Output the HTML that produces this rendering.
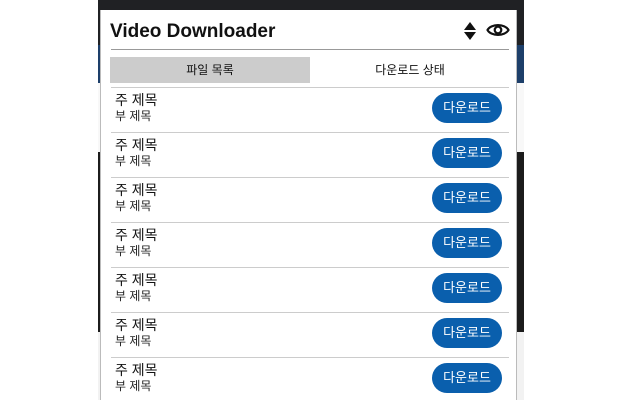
<!DOCTYPE html>
<html><head><meta charset="utf-8"><style>
*{margin:0;padding:0;box-sizing:border-box}
html,body{width:640px;height:400px;overflow:hidden}
body{position:relative;background:#fff;font-family:"Liberation Sans","Noto Sans CJK KR",sans-serif}
.bg{position:absolute;left:98px;width:426px}
.pop{position:absolute;left:100px;top:10px;width:417px;height:390px;background:#fff;border-left:1px solid #bbb;border-right:1px solid #bbb;overflow:hidden}
.title{position:absolute;left:9px;top:11px;font-size:19px;font-weight:bold;color:#111;line-height:22px}
.hr{position:absolute;left:10px;width:398px;height:1px;background:#ccc}
.tab{position:absolute;top:47px;height:26px;font-size:12px;line-height:26px;text-align:center;color:#111}
.row{position:absolute;left:10px;width:398px;height:45px}
.m{position:absolute;left:4px;top:5px;font-size:14px;line-height:16px;color:#111}
.s{position:absolute;left:4px;top:22px;font-size:12px;line-height:14px;color:#222}
.b{position:absolute;left:321px;top:6px;width:70px;height:30px;border-radius:15px;background:#0a5fad;color:#fff;font-size:13px;line-height:30px;text-align:center}
</style></head><body>
<div class="bg" style="top:0;height:45px;background:#202124"></div>
<div class="bg" style="top:45px;height:38px;background:#1d3f6a"></div>
<div class="bg" style="top:83px;height:69px;background:#f8f8f8"></div>
<div class="bg" style="top:152px;height:180px;background:#1c1c1c"></div>
<div class="bg" style="top:332px;height:68px;background:#f2f2f2"></div>
<div class="pop">
<div class="title">Video Downloader</div>
<svg style="position:absolute;left:362px;top:11px" width="14" height="20" viewBox="0 0 14 20"><path d="M7 1L13 9H1Z M7 19L13 11H1Z" fill="#111"/></svg>
<svg style="position:absolute;left:385px;top:11px" width="24" height="18" viewBox="0 0 24 18"><path d="M1.5 9C5 2.5 19 2.5 22.5 9C19 15.5 5 15.5 1.5 9Z" fill="none" stroke="#111" stroke-width="2.2"/><circle cx="12" cy="9" r="3.3" fill="none" stroke="#111" stroke-width="2.2"/></svg>
<div class="hr" style="top:39px;background:#999"></div>
<div class="tab" style="left:9px;width:200px;background:#ccc">파일 목록</div>
<div class="tab" style="left:209px;width:200px">다운로드 상태</div>
<div class="row" style="top:77px"><div class="hr" style="left:0;top:0"></div><div class="m">주 제목</div><div class="s">부 제목</div><div class="b">다운로드</div></div>
<div class="row" style="top:122px"><div class="hr" style="left:0;top:0"></div><div class="m">주 제목</div><div class="s">부 제목</div><div class="b">다운로드</div></div>
<div class="row" style="top:167px"><div class="hr" style="left:0;top:0"></div><div class="m">주 제목</div><div class="s">부 제목</div><div class="b">다운로드</div></div>
<div class="row" style="top:212px"><div class="hr" style="left:0;top:0"></div><div class="m">주 제목</div><div class="s">부 제목</div><div class="b">다운로드</div></div>
<div class="row" style="top:257px"><div class="hr" style="left:0;top:0"></div><div class="m">주 제목</div><div class="s">부 제목</div><div class="b">다운로드</div></div>
<div class="row" style="top:302px"><div class="hr" style="left:0;top:0"></div><div class="m">주 제목</div><div class="s">부 제목</div><div class="b">다운로드</div></div>
<div class="row" style="top:347px"><div class="hr" style="left:0;top:0"></div><div class="m">주 제목</div><div class="s">부 제목</div><div class="b">다운로드</div></div>
</div>
</body></html>
